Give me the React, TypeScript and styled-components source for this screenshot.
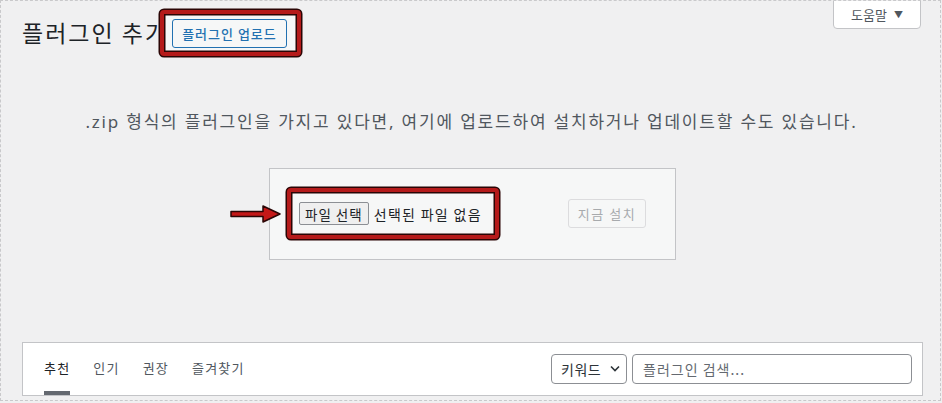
import React from "react";
import styled, { createGlobalStyle } from "styled-components";

const GlobalStyle = createGlobalStyle`
  html, body {
    margin: 0;
    padding: 0;
    background: #f0f0f1;
  }
  body {
    font-family: "Noto Sans", "Noto Sans CJK KR", sans-serif;
    color: #3c434a;
  }
`;

const Frame = styled.div`
  position: relative;
  box-sizing: border-box;
  width: 941px;
  height: 401px;
  border: 1px dashed #c9c9cb;
  background: #f0f0f1;
  padding: 0 19px 0 21px;
  display: flex;
  flex-direction: column;
  overflow: hidden;
`;

const TopRow = styled.div`
  display: flex;
  justify-content: space-between;
  align-items: flex-start;
`;

const TitleGroup = styled.div`
  display: flex;
  align-items: center;
  margin-top: 9px;
`;

const Title = styled.h1`
  margin: 0;
  font-size: 23px;
  font-weight: 400;
  line-height: 1.3;
  color: #1d2327;
  font-family: "Noto Sans CJK KR", sans-serif;
  letter-spacing: 2px;
`;

/* red highlight drawn around a control */
const Marker = styled.div<{ $pad: string }>`
  box-sizing: border-box;
  display: flex;
  align-items: center;
  flex-shrink: 0;
  padding: ${(p) => p.$pad};
  border: 4px solid #b51a1a;
  border-radius: 4px;
  box-shadow: 0 0 0 1.5px #2a0505, inset 0 0 0 1.5px #2a0505;
  background: #f6f7f7;
  white-space: nowrap;
`;

const OutlineButton = styled.button`
  box-sizing: border-box;
  height: 29px;
  padding: 0 9px;
  border: 1px solid #2271b1;
  border-radius: 3px;
  background: #f6f7f7;
  color: #2271b1;
  font-family: "Noto Sans CJK KR", sans-serif;
  font-size: 13px;
  font-weight: 500;
  letter-spacing: 1px;
`;

const HelpTab = styled.button`
  box-sizing: border-box;
  width: 88px;
  height: 29px;
  margin-top: -1px;
  border: 1px solid #c3c4c7;
  border-radius: 0 0 4px 4px;
  background: #fff;
  color: #50575e;
  font-family: "Noto Sans CJK KR", sans-serif;
  font-size: 13px;
  display: flex;
  align-items: center;
  justify-content: center;
  gap: 7px;
`;

const Caret = styled.span`
  font-size: 9px;
  color: #50575e;
`;

const Lead = styled.p`
  margin: 53px 0 0;
  text-align: center;
  font-size: 17px;
  line-height: 1.5;
  color: #50575e;
  font-family: "Noto Sans", "Noto Sans CJK KR", sans-serif;
  letter-spacing: 1.8px;
`;

const UploadForm = styled.div`
  position: relative;
  box-sizing: border-box;
  width: 407px;
  height: 92px;
  margin: 33px 0 0 247px;
  padding: 0 29px 0 17px;
  border: 1px solid #c3c4c7;
  background: #f6f7f7;
  display: flex;
  align-items: center;
  justify-content: space-between;
`;

const Arrow = styled.svg`
  position: absolute;
  left: -40px;
  top: 35px;
`;

const FileButton = styled.button`
  box-sizing: border-box;
  flex-shrink: 0;
  height: 23px;
  padding: 0 5px;
  border: 1px solid #8c8f94;
  border-radius: 2px;
  background: #efefef;
  color: #1d2327;
  font-family: "Noto Sans CJK KR", sans-serif;
  font-size: 13.5px;
  letter-spacing: 1px;
  white-space: nowrap;
`;

const FileName = styled.span`
  margin-left: 5px;
  font-size: 14px;
  color: #1d2327;
  font-family: "Noto Sans CJK KR", sans-serif;
  letter-spacing: 1.3px;
  white-space: nowrap;
`;

const InstallButton = styled.button`
  box-sizing: border-box;
  width: 78px;
  height: 29px;
  border: 1px solid #dcdcde;
  border-radius: 3px;
  background: #f6f7f7;
  color: #a7aaad;
  font-family: "Noto Sans CJK KR", sans-serif;
  font-size: 13px;
  letter-spacing: 1.5px;
`;

const FilterBar = styled.div`
  box-sizing: border-box;
  width: 901px;
  height: 54px;
  margin-top: 82px;
  padding: 0 10px 0 21px;
  border: 1px solid #c3c4c7;
  background: #fff;
  display: flex;
  align-items: stretch;
  justify-content: space-between;
`;

const Tabs = styled.div`
  display: flex;
  gap: 23px;
`;

const Tab = styled.a<{ $active?: boolean }>`
  display: flex;
  align-items: center;
  padding-top: 2px;
  font-size: 13px;
  font-family: "Noto Sans CJK KR", sans-serif;
  letter-spacing: 1.2px;
  color: ${(p) => (p.$active ? "#1d2327" : "#50575e")};
  border-bottom: 4px solid ${(p) => (p.$active ? "#646970" : "transparent")};
  box-sizing: border-box;
`;

const SearchGroup = styled.div`
  display: flex;
  align-items: center;
  gap: 5px;
`;

const KeywordSelect = styled.div`
  box-sizing: border-box;
  width: 76px;
  height: 30px;
  padding: 0 6px 0 9px;
  border: 1px solid #8c8f94;
  border-radius: 4px;
  background: #fff;
  display: flex;
  align-items: center;
  justify-content: space-between;
  font-size: 14px;
  letter-spacing: 0.5px;
  color: #2c3338;
  font-family: "Noto Sans CJK KR", sans-serif;
`;

const SearchInput = styled.input`
  box-sizing: border-box;
  width: 280px;
  height: 30px;
  padding: 0 10px;
  border: 1px solid #8c8f94;
  border-radius: 4px;
  background: #fff;
  font-size: 14px;
  letter-spacing: 1px;
  font-family: "Noto Sans CJK KR", sans-serif;
  &::placeholder {
    color: #646970;
  }
`;

export default function App() {
  return (
    <>
      <GlobalStyle />
      <Frame>
        <TopRow>
          <TitleGroup>
            <Title>플러그인 추가</Title>
            <Marker $pad="0 10px 0 8px" style={{ marginLeft: -8, height: 46 }}>
              <OutlineButton>플러그인 업로드</OutlineButton>
            </Marker>
          </TitleGroup>
          <HelpTab>
            도움말 <Caret>▼</Caret>
          </HelpTab>
        </TopRow>

        <Lead>
          .zip 형식의 플러그인을 가지고 있다면, 여기에 업로드하여 설치하거나 업데이트할 수도 있습니다.
        </Lead>

        <UploadForm>
          <Arrow width="52" height="20" viewBox="0 0 52 20">
            <path
              d="M1 7.5 H33 V2 L50 10 L33 18 V12.5 H1 Z"
              fill="#c41818"
              stroke="#2a0505"
              strokeWidth="1.5"
              strokeLinejoin="round"
            />
          </Arrow>
          <Marker $pad="0 4px 0 8px" style={{ width: 212, height: 51 }}>
            <FileButton>파일 선택</FileButton>
            <FileName>선택된 파일 없음</FileName>
          </Marker>
          <InstallButton disabled>지금 설치</InstallButton>
        </UploadForm>

        <FilterBar>
          <Tabs>
            <Tab $active>추천</Tab>
            <Tab>인기</Tab>
            <Tab>권장</Tab>
            <Tab>즐겨찾기</Tab>
          </Tabs>
          <SearchGroup>
            <KeywordSelect>
              키워드
              <svg width="10" height="7" viewBox="0 0 10 7">
                <path d="M1 1.5 L5 5.5 L9 1.5" fill="none" stroke="#2c3338" strokeWidth="1.6" />
              </svg>
            </KeywordSelect>
            <SearchInput placeholder="플러그인 검색..." />
          </SearchGroup>
        </FilterBar>
      </Frame>
    </>
  );
}
